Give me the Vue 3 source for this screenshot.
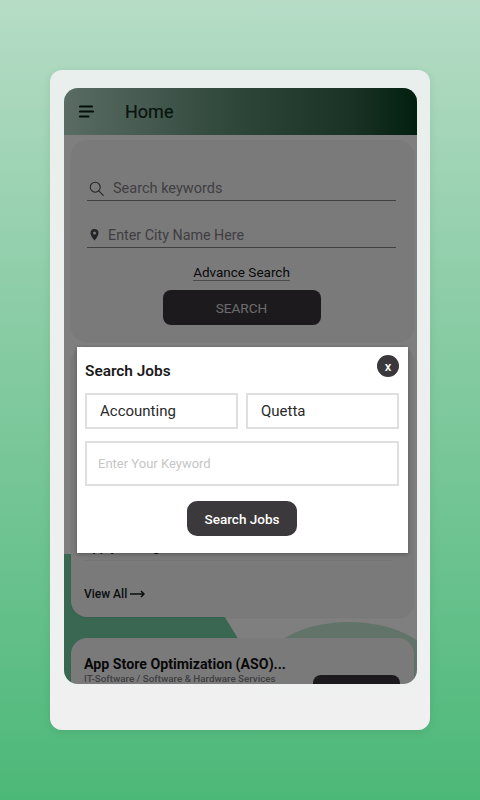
<template>
  <div class="page">
    <div class="frame">
      <div class="screen">
        <div class="bg-shapes">
          <div class="bg-green"></div>
          <div class="bg-arc"></div>
        </div>

        <header class="topbar">
          <svg class="menu-icon" width="15" height="13" viewBox="0 0 15 13">
            <path d="M1 1.5h12M1 6.5h13M1 11.5h8.5" fill="none" stroke="#0d1f17" stroke-width="2.2" stroke-linecap="round" />
          </svg>
          <span class="topbar-title">Home</span>
        </header>

        <div class="content">
          <section class="card search-card">
            <div class="line-field keywords">
              <svg width="15" height="15" viewBox="0 0 15 15">
                <circle cx="6.2" cy="6.2" r="5" fill="none" stroke="#4a4a4e" stroke-width="1.1" />
                <path d="M9.8 9.8l4.4 4.6" stroke="#4a4a4e" stroke-width="1.1" stroke-linecap="round" />
              </svg>
              <span>Search keywords</span>
            </div>
            <div class="line-field city">
              <svg width="11" height="14" viewBox="0 0 11 14">
                <path fill-rule="evenodd" d="M5.5 1a4 4 0 0 0-4 4c0 2.9 4 7.6 4 7.6s4-4.7 4-7.6a4 4 0 0 0-4-4zm0 2.6a1.5 1.5 0 1 1 0 3 1.5 1.5 0 0 1 0-3z" fill="#4a4a4e" />
              </svg>
              <span>Enter City Name Here</span>
            </div>
            <a class="advance">Advance Search</a>
            <button class="search-btn">SEARCH</button>
          </section>

          <section class="card jobs-card">
            <p class="peek">Apply Manager</p>
            <div class="divider"></div>
            <a class="view-all">
              View All
              <svg width="15" height="8" viewBox="0 0 15 8">
                <path d="M0 4h13.5M11 1l3 3-3 3" fill="none" stroke="#10201a" stroke-width="1.5" />
              </svg>
            </a>
          </section>

          <section class="card job-card">
            <div class="job-title">App Store Optimization (ASO)...</div>
            <div class="job-sub">IT-Software / Software &amp; Hardware Services</div>
            <div class="apply-btn"></div>
          </section>
        </div>

        <div class="overlay"></div>
      </div>
    </div>

    <div class="modal">
      <div class="close">x</div>
      <h2 class="modal-title">Search Jobs</h2>
      <div class="modal-row">
        <div class="box">Accounting</div>
        <div class="box">Quetta</div>
      </div>
      <div class="box keyword">Enter Your Keyword</div>
      <button class="modal-btn">Search Jobs</button>
    </div>
  </div>
</template>

<script setup>
</script>

<style>
body {
  margin: 0;
}
</style>

<style scoped>
.page {
  position: relative;
  width: 480px;
  height: 800px;
  padding-top: 70px;
  box-sizing: border-box;
  background: linear-gradient(180deg, #b6dcc6 0%, #8fcea9 35%, #4cb878 100%);
  font-family: Roboto, "Liberation Sans", sans-serif;
  overflow: hidden;
}

.frame {
  width: 380px;
  height: 660px;
  margin-left: 50px;
  padding: 18px 13px 0 14px;
  box-sizing: border-box;
  background: linear-gradient(180deg, #e9efec 0%, #f0f0f1 100%);
  border-radius: 12px;
  box-shadow: 0 2px 10px rgba(0, 0, 0, 0.08);
}

.screen {
  position: relative;
  height: 596px;
  border-radius: 14px;
  overflow: hidden;
  background: #fff;
}

.bg-shapes {
  position: absolute;
  inset: 0;
  overflow: hidden;
}

.bg-green {
  position: absolute;
  inset: 0;
  background: #74cfa2;
  clip-path: polygon(0 466px, 122px 466px, 202px 596px, 0 596px);
}

.bg-arc {
  position: absolute;
  left: 197px;
  top: 534px;
  width: 176px;
  height: 100px;
  border-radius: 50%;
  background: #c4e6d4;
}

.topbar {
  position: relative;
  display: flex;
  align-items: center;
  height: 47px;
  padding-left: 15px;
  background: linear-gradient(90deg, #b4d8c8 0%, #5c8a72 50%, #34634a 82%, #04401e 100%);
}

.topbar-title {
  margin-left: 31px;
  font-size: 18px;
  font-weight: 400;
  color: #0f2a1e;
  -webkit-text-stroke: 0.2px #0f2a1e;
}

.content {
  position: relative;
  padding: 5px 3px 0 7px;
}

.card {
  background: #f6f5f7;
  border-radius: 16px;
  box-shadow: 0 1px 2px rgba(0, 0, 0, 0.08);
}

.search-card {
  display: flex;
  flex-direction: column;
  height: 201px;
  padding: 35px 18px 0 16px;
  box-sizing: border-box;
}

.line-field {
  display: flex;
  align-items: center;
  gap: 9px;
  height: 25px;
  padding-left: 2px;
  border-bottom: 1px solid #808084;
  font-size: 14.5px;
  color: #7e7d82;
}

.line-field.keywords {
  height: 23px;
  padding-top: 2px;
}

.line-field.city {
  margin-top: 21px;
  gap: 8px;
  padding-left: 2px;
  font-size: 14.3px;
}

.advance {
  align-self: center;
  margin-top: 17px;
  font-size: 13.5px;
  color: #111;
  border-bottom: 1px solid #999;
  line-height: 15px;
}

.search-btn {
  align-self: center;
  width: 158px;
  height: 35px;
  margin-top: 9px;
  border: none;
  border-radius: 8px;
  background: #38353a;
  color: #d8d8d8;
  font: 400 13.6px Roboto, sans-serif;
}

.jobs-card {
  position: relative;
  height: 271px;
  margin-top: 5px;
  padding: 0 15px;
  box-sizing: border-box;
}

.peek {
  position: absolute;
  left: 13px;
  top: 193px;
  margin: 0;
  font-size: 13px;
  font-weight: 500;
  color: #111;
}

.divider {
  position: absolute;
  left: 13px;
  right: 22px;
  top: 214px;
  height: 1px;
  background: #e6e6e8;
}

.view-all {
  position: absolute;
  left: 13px;
  top: 241px;
  display: flex;
  align-items: center;
  gap: 3px;
  font-size: 12px;
  font-weight: 500;
  color: #10201a;
}

.job-card {
  position: relative;
  height: 90px;
  margin-top: 21px;
  padding: 17px 13px 0;
  box-sizing: border-box;
}

.job-title {
  font-size: 14.2px;
  font-weight: 700;
  line-height: 18px;
  color: #111;
}

.job-sub {
  font-size: 9.8px;
  font-weight: 500;
  line-height: 12px;
  color: #808084;
}

.apply-btn {
  position: absolute;
  right: 14px;
  top: 37px;
  width: 87px;
  height: 35px;
  border-radius: 8px;
  background: #38353a;
}

.overlay {
  position: absolute;
  inset: 0;
  background: rgba(0, 0, 0, 0.5);
}

.modal {
  position: absolute;
  left: 77px;
  top: 347px;
  width: 331px;
  height: 206px;
  padding: 15px 9px 0 8px;
  box-sizing: border-box;
  background: #fff;
  box-shadow: 0 1px 4px rgba(0, 0, 0, 0.3);
}

.close {
  position: absolute;
  right: 9px;
  top: 8px;
  width: 22px;
  height: 22px;
  border-radius: 50%;
  background: #3a383a;
  color: #fff;
  font-size: 13px;
  font-weight: 500;
  line-height: 24px;
  text-align: center;
}

.modal-title {
  margin: 0;
  font-size: 15.4px;
  font-weight: 600;
  line-height: 18px;
  color: #1a1a1a;
}

.modal-row {
  display: grid;
  grid-template-columns: 1fr 1fr;
  gap: 8px;
  margin-top: 13px;
}

.box {
  display: flex;
  align-items: center;
  height: 36px;
  padding-left: 13px;
  box-sizing: border-box;
  border: 2px solid #dfdfdf;
  font-size: 15px;
  color: #2a2a2a;
}

.keyword {
  height: 45px;
  margin-top: 12px;
  padding-left: 11px;
  font-size: 13px;
  color: #c6c6c6;
}

.modal-btn {
  display: block;
  width: 110px;
  height: 35px;
  margin: 15px auto 0;
  border: none;
  border-radius: 10px;
  background: #3b393b;
  color: #fff;
  font: 500 13.5px Roboto, sans-serif;
}
</style>
